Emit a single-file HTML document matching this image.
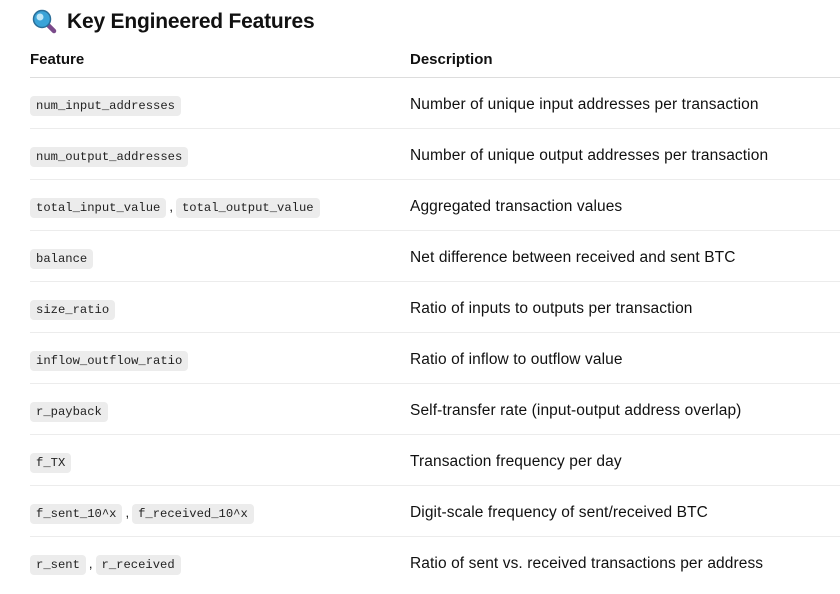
<!DOCTYPE html>
<html><head><meta charset="utf-8"><style>
body{margin:0;background:#fff;width:840px;height:594px;overflow:hidden;font-family:"Liberation Sans",sans-serif;color:#111}
h2{position:absolute;left:32px;top:7px;margin:0;font-size:21px;font-weight:600;line-height:30px;display:flex;align-items:center;letter-spacing:-0.2px}
h2 svg{margin-right:9px}
.hdr{position:absolute;top:48px;left:30px;width:810px;height:29px;border-bottom:1px solid #ddd;font-size:15px;font-weight:600}
.row{position:absolute;left:30px;width:810px;height:50px;border-bottom:1px solid #ececec;font-size:15.5px;letter-spacing:0.1px}
.c1{position:absolute;left:0;top:calc(50% + 2px);transform:translateY(-50%);letter-spacing:0}
.c2{position:absolute;left:380px;top:calc(50% + 2px);transform:translateY(-50%)}
code{font-family:"Liberation Mono",monospace;font-size:12.2px;background:#ececec;border-radius:4px;padding:3px 6px;color:#222}
.cm{margin:0 3px 0 3px;font-size:13px}
</style></head><body>
<h2><svg width="26" height="26" viewBox="0 0 26 26"><line x1="15" y1="15" x2="22" y2="22" stroke="#7a4a8a" stroke-width="4.5" stroke-linecap="round"/><circle cx="10" cy="10" r="8.5" fill="#3aa3d8" stroke="#2a6e99" stroke-width="1.5"/><circle cx="8" cy="8" r="3.5" fill="#bfe6f7"/></svg>Key Engineered Features</h2>
<div class="hdr"><span style="position:absolute;left:0;top:3px">Feature</span><span style="position:absolute;left:380px;top:3px">Description</span></div>
<div class="row" style="top:78px"><div class="c1"><code>num_input_addresses</code></div><div class="c2">Number of unique input addresses per transaction</div></div>
<div class="row" style="top:129px"><div class="c1"><code>num_output_addresses</code></div><div class="c2">Number of unique output addresses per transaction</div></div>
<div class="row" style="top:180px"><div class="c1"><code>total_input_value</code><span class="cm">,</span><code>total_output_value</code></div><div class="c2">Aggregated transaction values</div></div>
<div class="row" style="top:231px"><div class="c1"><code>balance</code></div><div class="c2">Net difference between received and sent BTC</div></div>
<div class="row" style="top:282px"><div class="c1"><code>size_ratio</code></div><div class="c2">Ratio of inputs to outputs per transaction</div></div>
<div class="row" style="top:333px"><div class="c1"><code>inflow_outflow_ratio</code></div><div class="c2">Ratio of inflow to outflow value</div></div>
<div class="row" style="top:384px"><div class="c1"><code>r_payback</code></div><div class="c2">Self-transfer rate (input-output address overlap)</div></div>
<div class="row" style="top:435px"><div class="c1"><code>f_TX</code></div><div class="c2">Transaction frequency per day</div></div>
<div class="row" style="top:486px"><div class="c1"><code>f_sent_10^x</code><span class="cm">,</span><code>f_received_10^x</code></div><div class="c2">Digit-scale frequency of sent/received BTC</div></div>
<div class="row" style="top:537px;border-bottom:none"><div class="c1"><code>r_sent</code><span class="cm">,</span><code>r_received</code></div><div class="c2">Ratio of sent vs. received transactions per address</div></div>
</body></html>
